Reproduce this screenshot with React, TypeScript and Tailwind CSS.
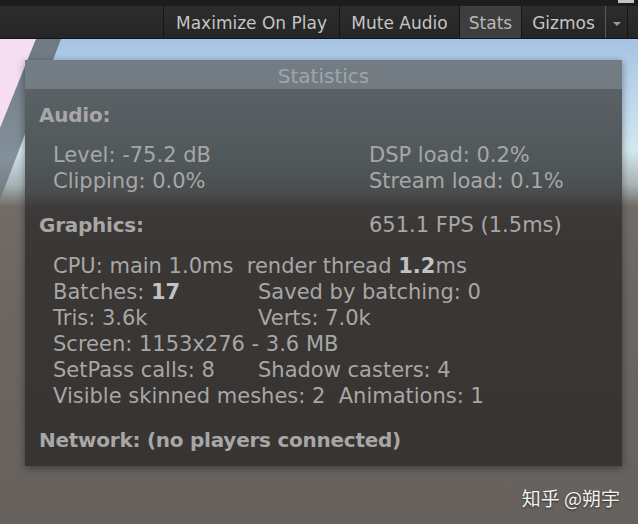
import React from "react";

function Scene() {
  return (
    <svg
      className="absolute inset-0"
      width="638"
      height="524"
      viewBox="0 0 638 524"
    >
      <defs>
        <linearGradient id="sky" x1="0" y1="39" x2="0" y2="524" gradientUnits="userSpaceOnUse">
          <stop offset="0" stopColor="#a6c3e3" />
          <stop offset="0.17" stopColor="#c6deed" />
          <stop offset="0.23" stopColor="#d3e8ef" />
          <stop offset="0.3" stopColor="#a8b3b5" />
          <stop offset="0.345" stopColor="#716c67" />
          <stop offset="0.55" stopColor="#6b6661" />
          <stop offset="1" stopColor="#66615c" />
        </linearGradient>
        <linearGradient id="band" x1="0" y1="39" x2="0" y2="240" gradientUnits="userSpaceOnUse">
          <stop offset="0" stopColor="#6f7983" />
          <stop offset="0.6" stopColor="#84909a" />
          <stop offset="1" stopColor="#5f5f5f" />
        </linearGradient>
      </defs>
      <rect x="0" y="0" width="638" height="524" fill="url(#sky)" />
      <polygon points="0,39 36,39 0,128" fill="#f5def2" />
      <polygon points="36,39 61,39 0,200 0,128" fill="url(#band)" />
    </svg>
  );
}

function Toolbar() {
  return (
    <div className="flex flex-col h-[39px] font-['DejaVu_Sans',sans-serif] text-[17px]">
      <div className="flex justify-end h-[6px] bg-[#1d1d1d]">
        <div className="w-[16px] h-[3px] bg-[#c4c4c4] mr-[4px]" />
      </div>
      <div className="flex h-[32px] bg-[linear-gradient(to_bottom,#2d2d2d,#252525)] text-[#c4c4c4]">
        <div className="w-[163px]" />
        <div className="w-[176px] pt-[3px] border-l border-[#161616] flex items-center justify-center">
          Maximize On Play
        </div>
        <div className="w-[120px] pt-[3px] border-l border-[#161616] flex items-center justify-center">
          Mute Audio
        </div>
        <div className="w-[62px] pt-[3px] border-l border-[#161616] bg-[#3e3e3e] text-[#b8b8b8] flex items-center justify-center">
          Stats
        </div>
        <div className="w-[85px] pt-[3px] border-l border-r border-[#161616] border-r-[#5a5a5a] flex items-center justify-center">
          Gizmos
        </div>
        <div className="w-[22px] pt-[3px] border-r border-[#161616] flex items-center justify-center">
          <div className="w-0 h-0 border-l-[4px] border-r-[4px] border-t-[4px] border-l-transparent border-r-transparent border-t-[#9a9a9a]" />
        </div>
        <div className="flex-1" />
      </div>
      <div className="h-[1px] bg-[#141414]" />
    </div>
  );
}

const row = "h-[26px] leading-[26px] whitespace-pre";
const head = "h-[26px] leading-[26px] font-bold text-[20px] tracking-[-0.25px] pl-[14px]";

function StatsPanel() {
  return (
    <div className="ml-[25px] mt-[21px] w-[597px] shadow-[0_2px_8px_rgba(0,0,0,0.4)] font-['DejaVu_Sans',sans-serif]">
      <div className="h-[29px] pt-[4px] leading-[25px] bg-[#737c83] text-center text-[20px] text-[#9ea7ad]">
        Statistics
      </div>
      <div className="pt-[13px] pb-[13px] text-[21px] text-[#a7a7a7] bg-[linear-gradient(to_bottom,#5b6266_0%,#505759_20%,#4a4d4e_27%,#3f3d3c_31%,#3a3735_36%,#373432_100%)]">
        <div className={head}>Audio:</div>
        <div className="mt-[14px] pl-[28px] grid grid-cols-[316px_1fr]">
          <div className={row}>Level: -75.2 dB</div>
          <div className={row}>DSP load: 0.2%</div>
          <div className={row}>Clipping: 0.0%</div>
          <div className={row}>Stream load: 0.1%</div>
        </div>
        <div className="mt-[18px] grid grid-cols-[344px_1fr]">
          <div className={head}>Graphics:</div>
          <div className={row}>651.1 FPS (1.5ms)</div>
        </div>
        <div className="mt-[15px] pl-[28px] grid grid-cols-[205px_1fr]">
          <div className={`${row} col-span-2`}>
            CPU: main 1.0ms  render thread <span className="font-bold text-[#c2c2c2]">1.2</span>ms
          </div>
          <div className={row}>
            Batches: <span className="font-bold text-[#c2c2c2]">17</span>
          </div>
          <div className={row}>Saved by batching: 0</div>
          <div className={row}>Tris: 3.6k</div>
          <div className={row}>Verts: 7.0k</div>
          <div className={`${row} col-span-2`}>Screen: 1153x276 - 3.6 MB</div>
          <div className={row}>SetPass calls: 8</div>
          <div className={row}>Shadow casters: 4</div>
          <div className={`${row} col-span-2`}>Visible skinned meshes: 2  Animations: 1</div>
        </div>
        <div className={`${head} mt-[18px]`}>Network: (no players connected)</div>
      </div>
    </div>
  );
}

export default function App() {
  return (
    <div className="relative w-[638px] h-[524px] overflow-hidden">
      <Scene />
      <div className="relative flex flex-col">
        <Toolbar />
        <StatsPanel />
        <div className="mt-[19px] pr-[18px] h-[26px] leading-[26px] text-right text-[19px] text-[#f2f2f2] font-['Noto_Sans_CJK_SC',sans-serif] [text-shadow:0_1px_2px_rgba(0,0,0,0.6)]">
          知乎 @朔宇
        </div>
      </div>
    </div>
  );
}
